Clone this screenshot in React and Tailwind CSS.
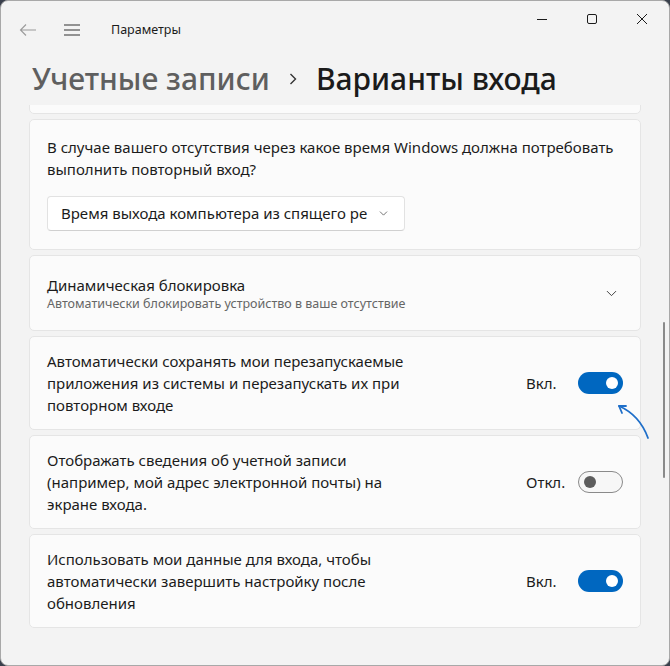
import { ChevronDown } from 'lucide-react'

const font = { fontFamily: '"Noto Sans", "Open Sans", sans-serif' }

function Toggle({ on }) {
  if (on) {
    return (
      <div className="w-[45px] h-[22px] rounded-full bg-[#0067c0] flex items-center justify-end pr-[5px]">
        <div className="w-[12px] h-[12px] rounded-full bg-white" />
      </div>
    )
  }
  return (
    <div className="w-[45px] h-[22px] rounded-full border border-[#8a8a8a] bg-[#f7f7f7] flex items-center pl-[5px]">
      <div className="w-[12px] h-[12px] rounded-full bg-[#5d5d5d]" />
    </div>
  )
}

function ToggleCard({ lines, on }) {
  return (
    <div className="bg-[#fbfbfb] border border-[#e5e5e5] rounded-[5px] h-[94px] flex items-center pl-[17px] pr-[17px]">
      <div className="flex-1 text-[15px] leading-[22px] text-[#1b1b1b]">
        {lines.map(l => (
          <div key={l}>{l}</div>
        ))}
      </div>
      <span className="w-[52px] text-[15px] text-[#1b1b1b]">{on ? 'Вкл.' : 'Откл.'}</span>
      <Toggle on={on} />
    </div>
  )
}

export default function App() {
  return (
    <div className="w-[670px] h-[666px] bg-[#3a404c]" style={font}>
      <div className="w-full h-full rounded-[8px] bg-[#f3f3f3] border border-[#a8a8a8] overflow-hidden relative flex flex-col">

        {/* title bar */}
        <div className="h-[52px] flex items-start shrink-0">
          <div className="flex items-center h-[58px] pl-[18px]">
            <svg width="18" height="14" viewBox="0 0 18 14" className="text-[#9a9a9a]">
              <path d="M17 7H2M7 1.5L1.5 7L7 12.5" fill="none" stroke="currentColor" strokeWidth="1.1" />
            </svg>
            <svg width="18" height="14" viewBox="0 0 18 14" className="ml-[26px] text-[#333]">
              <path d="M1 2h16M1 7h16M1 12h16" fill="none" stroke="currentColor" strokeWidth="1.2" />
            </svg>
            <span className="ml-[30px] text-[12.5px] text-[#1b1b1b]">Параметры</span>
          </div>
          <div className="ml-auto flex items-center h-[36px] pr-[21px] text-[#1b1b1b]">
            <svg width="12" height="12" viewBox="0 0 12 12">
              <path d="M1 6.5h10" stroke="currentColor" strokeWidth="1" />
            </svg>
            <svg width="12" height="12" viewBox="0 0 12 12" className="ml-[38px]">
              <rect x="1.5" y="1.5" width="9" height="9" rx="1.5" fill="none" stroke="currentColor" strokeWidth="1" />
            </svg>
            <svg width="12" height="12" viewBox="0 0 12 12" className="ml-[38px]">
              <path d="M1 1l10 10M11 1L1 11" stroke="currentColor" strokeWidth="1" />
            </svg>
          </div>
        </div>

        {/* heading */}
        <div className="h-[52px] shrink-0 flex items-center pl-[31px] text-[30px] leading-[36px] font-medium">
          <span className="text-[#5f5f5f]">Учетные записи</span>
          <svg width="10" height="14" viewBox="0 0 10 14" className="mx-[18px] text-[#333]">
            <path d="M2.5 2l5 5-5 5" fill="none" stroke="currentColor" strokeWidth="1.4" />
          </svg>
          <span className="text-[#1b1b1b]">Варианты входа</span>
        </div>

        {/* content */}
        <div className="flex-1 overflow-hidden relative px-[28px]">
          <div className="flex flex-col gap-[5px] -mt-[41px]">
            <div className="bg-[#fbfbfb] border border-[#e5e5e5] rounded-[5px] h-[50px]" />

            <div className="bg-[#fbfbfb] border border-[#e5e5e5] rounded-[5px] h-[131px] pl-[17px] pt-[16px]">
              <div className="text-[15px] leading-[22px] text-[#1b1b1b]">
                <div>В случае вашего отсутствия через какое время Windows должна потребовать</div>
                <div>выполнить повторный вход?</div>
              </div>
              <div className="mt-[16px] w-[358px] h-[35px] bg-white border border-[#e2e2e2] border-b-[#d0d0d0] rounded-[4px] flex items-center pl-[13px] pr-[14px]">
                <span className="flex-1 text-[15px] text-[#1b1b1b]">Время выхода компьютера из спящего ре</span>
                <ChevronDown size={13} strokeWidth={1.5} className="text-[#555]" />
              </div>
            </div>

            <div className="bg-[#fbfbfb] border border-[#e5e5e5] rounded-[5px] h-[76px] flex items-center pl-[17px] pr-[20px]">
              <div className="flex-1">
                <div className="text-[15px] leading-[20px] text-[#1b1b1b]">Динамическая блокировка</div>
                <div className="text-[12.5px] leading-[17px] text-[#666]">Автоматически блокировать устройство в ваше отсутствие</div>
              </div>
              <ChevronDown size={17} strokeWidth={1.3} className="text-[#333]" />
            </div>

            <ToggleCard
              on
              lines={['Автоматически сохранять мои перезапускаемые', 'приложения из системы и перезапускать их при', 'повторном входе']}
            />
            <ToggleCard
              on={false}
              lines={['Отображать сведения об учетной записи', '(например, мой адрес электронной почты) на', 'экране входа.']}
            />
            <ToggleCard
              on
              lines={['Использовать мои данные для входа, чтобы', 'автоматически завершить настройку после', 'обновления']}
            />
          </div>

          {/* scrollbar */}
          <div className="absolute right-[4px] top-[217px] w-[2px] h-[156px] rounded-full bg-[#8a8a8a]" />
        </div>

        {/* annotation arrow */}
        <svg width="40" height="40" viewBox="0 0 40 40" className="absolute left-[612px] top-[400px]">
          <path d="M35 37C31 26 22 12 6 5" fill="none" stroke="#1f6fc9" strokeWidth="1.8" strokeLinecap="round" />
          <path d="M6 5L13 5M6 5L9 12" fill="none" stroke="#1f6fc9" strokeWidth="1.8" strokeLinecap="round" />
        </svg>
      </div>
    </div>
  )
}
